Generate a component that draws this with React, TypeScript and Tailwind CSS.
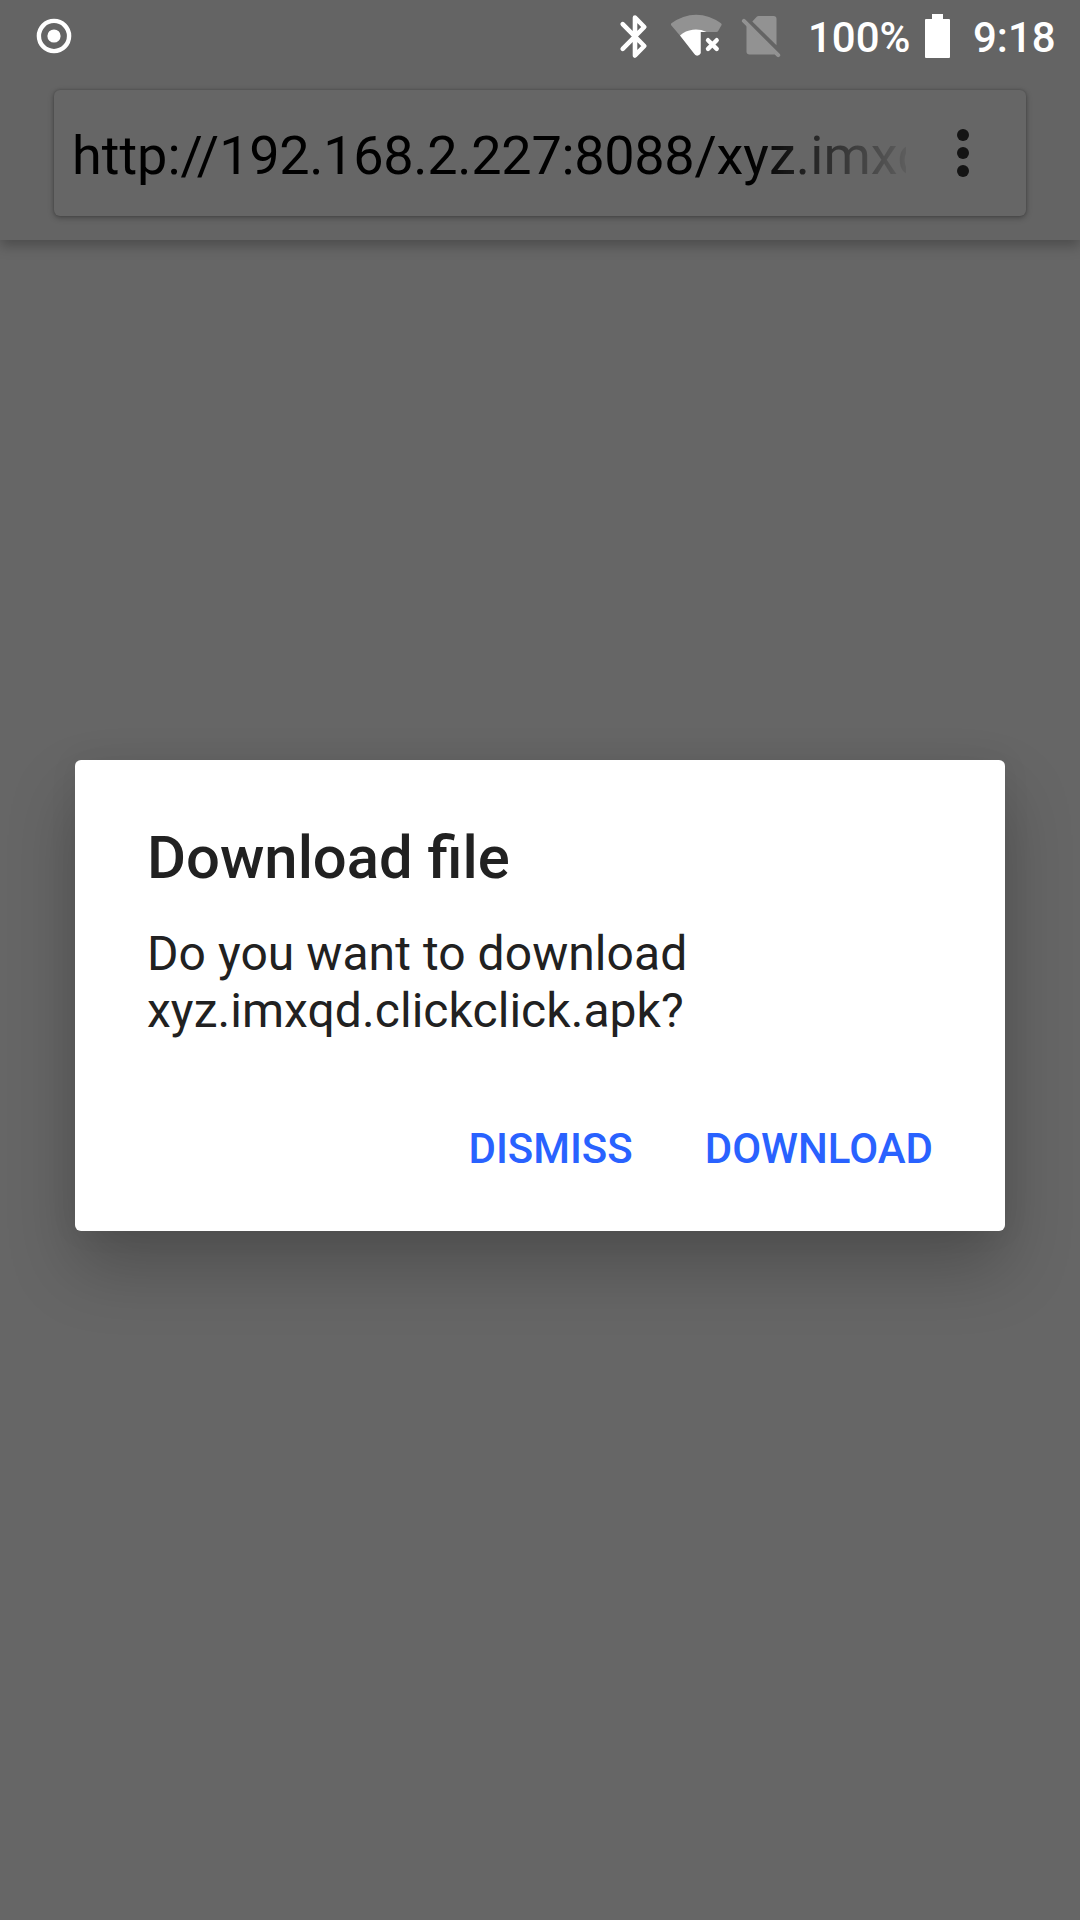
import React from "react";

function RecordIcon() {
  return (
    <svg className="h-9 w-9" viewBox="0 0 36 36" fill="none">
      <circle cx="18" cy="18" r="15.1" stroke="white" strokeWidth="4.4" />
      <circle cx="18" cy="18" r="6.6" fill="white" />
    </svg>
  );
}

function BluetoothIcon() {
  return (
    <svg className="h-[50px] w-[50px]" viewBox="0 0 50 50" fill="none" stroke="white" strokeWidth="4.6" strokeLinecap="round" strokeLinejoin="round">
      <path d="M12.7 13.2 34.300 35 25 44.500V6.500L34.300 16 12.700 37.800" />
    </svg>
  );
}

function WifiOffIcon() {
  return (
    <svg className="h-[50px] w-[54px]" viewBox="0 0 54 50">
      <path d="M1.400 15.600Q.300 14.100 1.800 13.100A40 40 0 0 1 50.600 13.100Q52.300 14.100 51.300 15.600L48 21.200Q47.500 22 46.500 22H30.700V43L26.500 45Z" fill="#929292" />
      <path d="M10 25.400A24.500 24.500 0 0 1 36.500 22H30.700V43.200Q29.500 45.900 26.500 45.600Q25.300 45.300 24.200 43.800Z" fill="white" />
      <path d="M38 30.200 46.700 38.900M46.700 30.200 38 38.900" stroke="white" strokeWidth="4.400" strokeLinecap="round" />
    </svg>
  );
}

function NoSimIcon() {
  return (
    <svg className="h-[50px] w-[44px]" viewBox="0 0 44 50" fill="#929292">
      <path d="M19.500 6H34.500Q37.500 6 37.500 9V35.300L13.300 11.500L18 6.600Q18.600 6 19.500 6Z" />
      <path d="M7.500 14V41.500Q7.500 44.500 10.500 44.500H34.500L38 44Z" />
      <path d="M4.900 10.900 39.200 45.200" stroke="#929292" strokeWidth="4" strokeLinecap="round" />
    </svg>
  );
}

function BatteryIcon() {
  return (
    <svg className="h-11 w-[25px]" viewBox="0 0 25 44" fill="white">
      <path d="M7 0H18V5H24Q25 5 25 6V43Q25 44 24 44H1Q0 44 0 43V6Q0 5 1 5H7Z" />
    </svg>
  );
}

function StatusBar() {
  return (
    <div className="flex h-[72px] items-start pl-9 pr-[23px] text-[42px] font-medium leading-[72px] text-white">
      <div className="mt-[18px]"><RecordIcon /></div>
      <div className="ml-auto mt-[11px]"><BluetoothIcon /></div>
      <div className="ml-[10px] mt-[10px]"><WifiOffIcon /></div>
      <div className="ml-[15px] mt-[10px]"><NoSimIcon /></div>
      <span className="ml-[25px] w-[105px] whitespace-nowrap pt-[2px]">100%</span>
      <div className="ml-[12px] mt-[14px]"><BatteryIcon /></div>
      <span className="ml-[23px] w-[84px] whitespace-nowrap pt-[2px]">9:18</span>
    </div>
  );
}

function AddressBar() {
  return (
    <div className="mx-[54px] mt-[18px] flex h-[126px] items-center rounded-[6px] bg-[#666666] pl-[18px] shadow-[0_2px_6px_rgba(0,0,0,0.28),0_0_3px_rgba(0,0,0,0.22)]">
      <div className="w-[834px] overflow-hidden whitespace-nowrap pt-[5px] text-[54px] leading-[80px] text-black [mask-image:linear-gradient(to_right,black_678px,transparent_848px)]">
        http://<span className="tracking-[-0.3px]">192.168.2.227:8088/</span><span className="tracking-[0.1px]">xyz.imxqd</span>
      </div>
      <div className="ml-[51px] flex flex-col gap-[6px]">
        <span className="h-3 w-3 rounded-full bg-[#141414]" />
        <span className="h-3 w-3 rounded-full bg-[#141414]" />
        <span className="h-3 w-3 rounded-full bg-[#141414]" />
      </div>
    </div>
  );
}

function DownloadDialog() {
  return (
    <div className="h-[471px] w-[930px] rounded-[6px] bg-white px-[72px] pt-[63px] text-[#212121] shadow-[0_36px_68px_rgba(0,0,0,0.23),0_0_30px_rgba(0,0,0,0.06)]">
      <h1 className="text-[59.8px] font-medium leading-[70px]">Download file</h1>
      <p className="mt-[32px] text-[48px] leading-[57px] tracking-[0.06px]">
        Do you want to download
        <br />
        xyz.imxqd.clickclick.apk?
      </p>
      <div className="mt-[85px] flex justify-end gap-[72px] text-[42px] font-medium leading-[50px] text-[#2962ff]">
        <button>DISMISS</button>
        <button>DOWNLOAD</button>
      </div>
    </div>
  );
}

export default function App() {
  return (
    <div className="flex h-[1920px] w-[1080px] flex-col overflow-hidden bg-[#666666] font-['Roboto',sans-serif]">
      <header className="h-[240px] shrink-0 bg-[#646464] shadow-[0_6px_12px_rgba(0,0,0,0.25)]">
        <StatusBar />
        <AddressBar />
      </header>
      <main className="flex justify-center pt-[520px]">
        <DownloadDialog />
      </main>
    </div>
  );
}
